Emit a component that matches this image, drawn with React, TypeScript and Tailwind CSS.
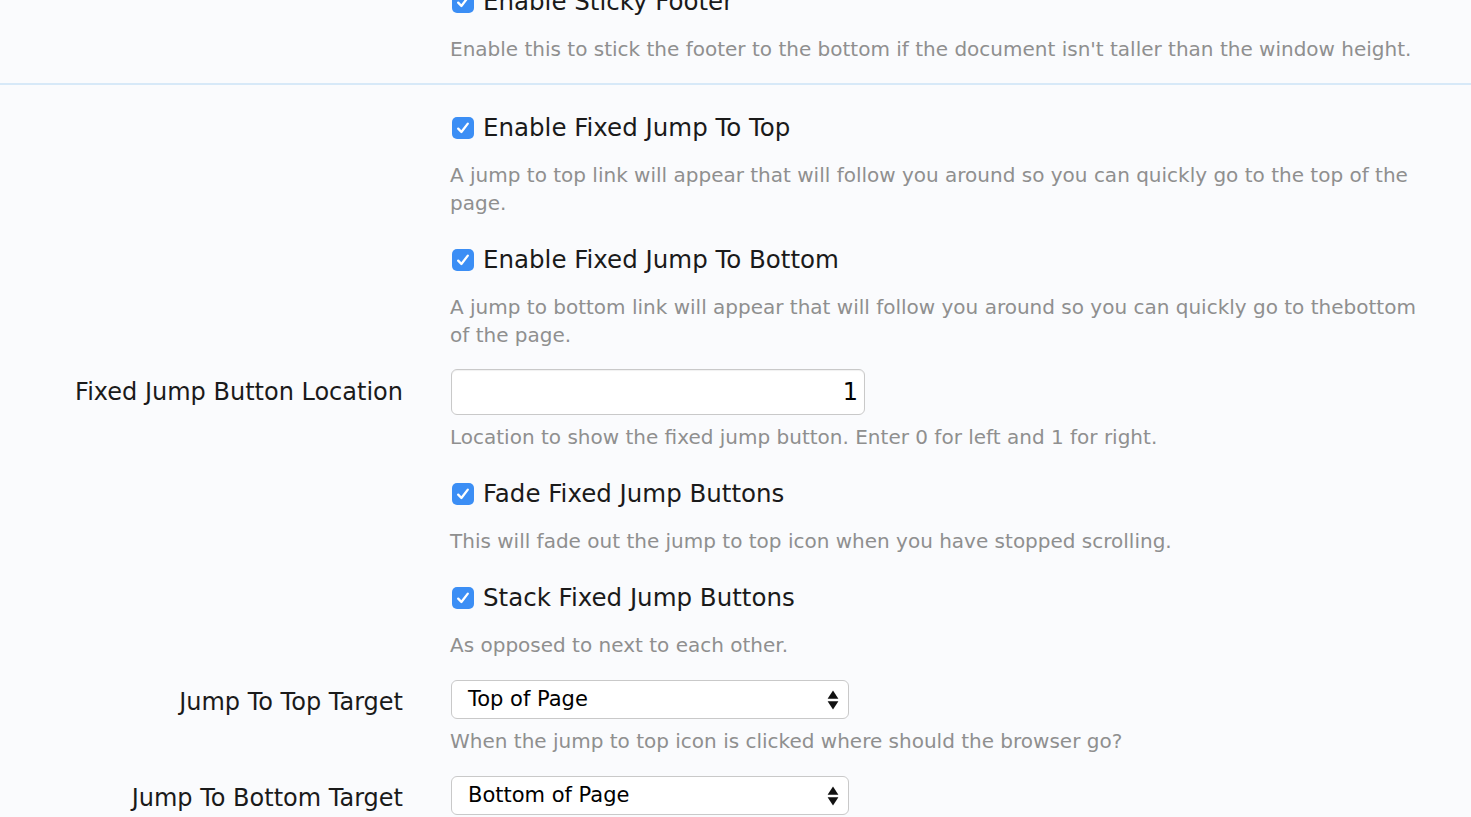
const font = { fontFamily: '"DejaVu Sans", Verdana, sans-serif' };

type Field =
  | { kind: "check"; label: string; help: string }
  | { kind: "number"; label: string; value: string; help: string }
  | { kind: "select"; label: string; value: string; help?: string };

const fields: Field[] = [
  {
    kind: "check",
    label: "Enable Fixed Jump To Top",
    help: "A jump to top link will appear that will follow you around so you can quickly go to the top of the page.",
  },
  {
    kind: "check",
    label: "Enable Fixed Jump To Bottom",
    help: "A jump to bottom link will appear that will follow you around so you can quickly go to thebottom of the page.",
  },
  {
    kind: "number",
    label: "Fixed Jump Button Location",
    value: "1",
    help: "Location to show the fixed jump button. Enter 0 for left and 1 for right.",
  },
  {
    kind: "check",
    label: "Fade Fixed Jump Buttons",
    help: "This will fade out the jump to top icon when you have stopped scrolling.",
  },
  {
    kind: "check",
    label: "Stack Fixed Jump Buttons",
    help: "As opposed to next to each other.",
  },
  {
    kind: "select",
    label: "Jump To Top Target",
    value: "Top of Page",
    help: "When the jump to top icon is clicked where should the browser go?",
  },
  {
    kind: "select",
    label: "Jump To Bottom Target",
    value: "Bottom of Page",
  },
];

function Checkbox() {
  return (
    <span className="flex h-[22px] w-[22px] shrink-0 items-center justify-center rounded-[5px] bg-[#3b8ef5]">
      <svg viewBox="0 0 22 22" className="h-[22px] w-[22px]" fill="none">
        <path
          d="M6.2 11.6 9.4 15 15.8 6.6"
          stroke="white"
          strokeWidth="2.3"
          strokeLinecap="round"
          strokeLinejoin="round"
        />
      </svg>
    </span>
  );
}

function Help({ text }: { text: string }) {
  return <p className="text-[20px] leading-[28px] text-[#8f8f8f]">{text}</p>;
}

function Row({ field }: { field: Field }) {
  return (
    <div className={field.kind === "select" ? "flex pt-[21px]" : "flex pt-[20px]"}>
      <div className="w-[403px] shrink-0 text-right text-[24px] text-[#1a1a1a]">
        {field.kind === "number" && (
          <div className="flex h-[46px] items-center justify-end">{field.label}</div>
        )}
        {field.kind === "select" && (
          <div className="flex h-[39px] items-center justify-end pt-[4px]">{field.label}</div>
        )}
      </div>
      <div className="ml-[47px] w-[971px]">
        {field.kind === "check" && (
          <div className="mb-[10px] flex h-[46px] items-center gap-[9px] pl-[2px] text-[24.5px] text-[#1a1a1a]">
            <Checkbox />
            <span>{field.label}</span>
          </div>
        )}
        {field.kind === "number" && (
          <div className="mb-[8px] ml-[1px] flex h-[46px] w-[414px] items-center justify-end rounded-[6px] border border-[#c9c9c9] bg-white pr-[6px] text-[24px] text-black shadow-[inset_0_1px_1px_rgba(0,0,0,0.06)]">
            {field.value}
          </div>
        )}
        {field.kind === "select" && (
          <div className="mb-[8px] ml-[1px] flex h-[39px] w-[398px] items-center justify-between rounded-[6px] border border-[#c9c9c9] bg-white pl-[16px] pr-[9px] text-[21px] text-black">
            <span>{field.value}</span>
            <svg viewBox="0 0 10 18" className="h-[22px] w-[12px]">
              <path d="M5 1 9.5 8 0.5 8Z" fill="#111" />
              <path d="M5 17 9.5 10 0.5 10Z" fill="#111" />
            </svg>
          </div>
        )}
        {field.help && <Help text={field.help} />}
      </div>
    </div>
  );
}

export default function App() {
  return (
    <div className="h-[817px] w-full overflow-hidden bg-[#fafbfd]" style={font}>
      <div className="-mt-[41px] pb-[20px]">
        <Row
          field={{
            kind: "check",
            label: "Enable Sticky Footer",
            help: "Enable this to stick the footer to the bottom if the document isn't taller than the window height.",
          }}
        />
      </div>
      <div className="h-[2px] bg-[#d7e9f8]" />
      {fields.map((f) => (
        <Row key={f.label} field={f} />
      ))}
    </div>
  );
}
